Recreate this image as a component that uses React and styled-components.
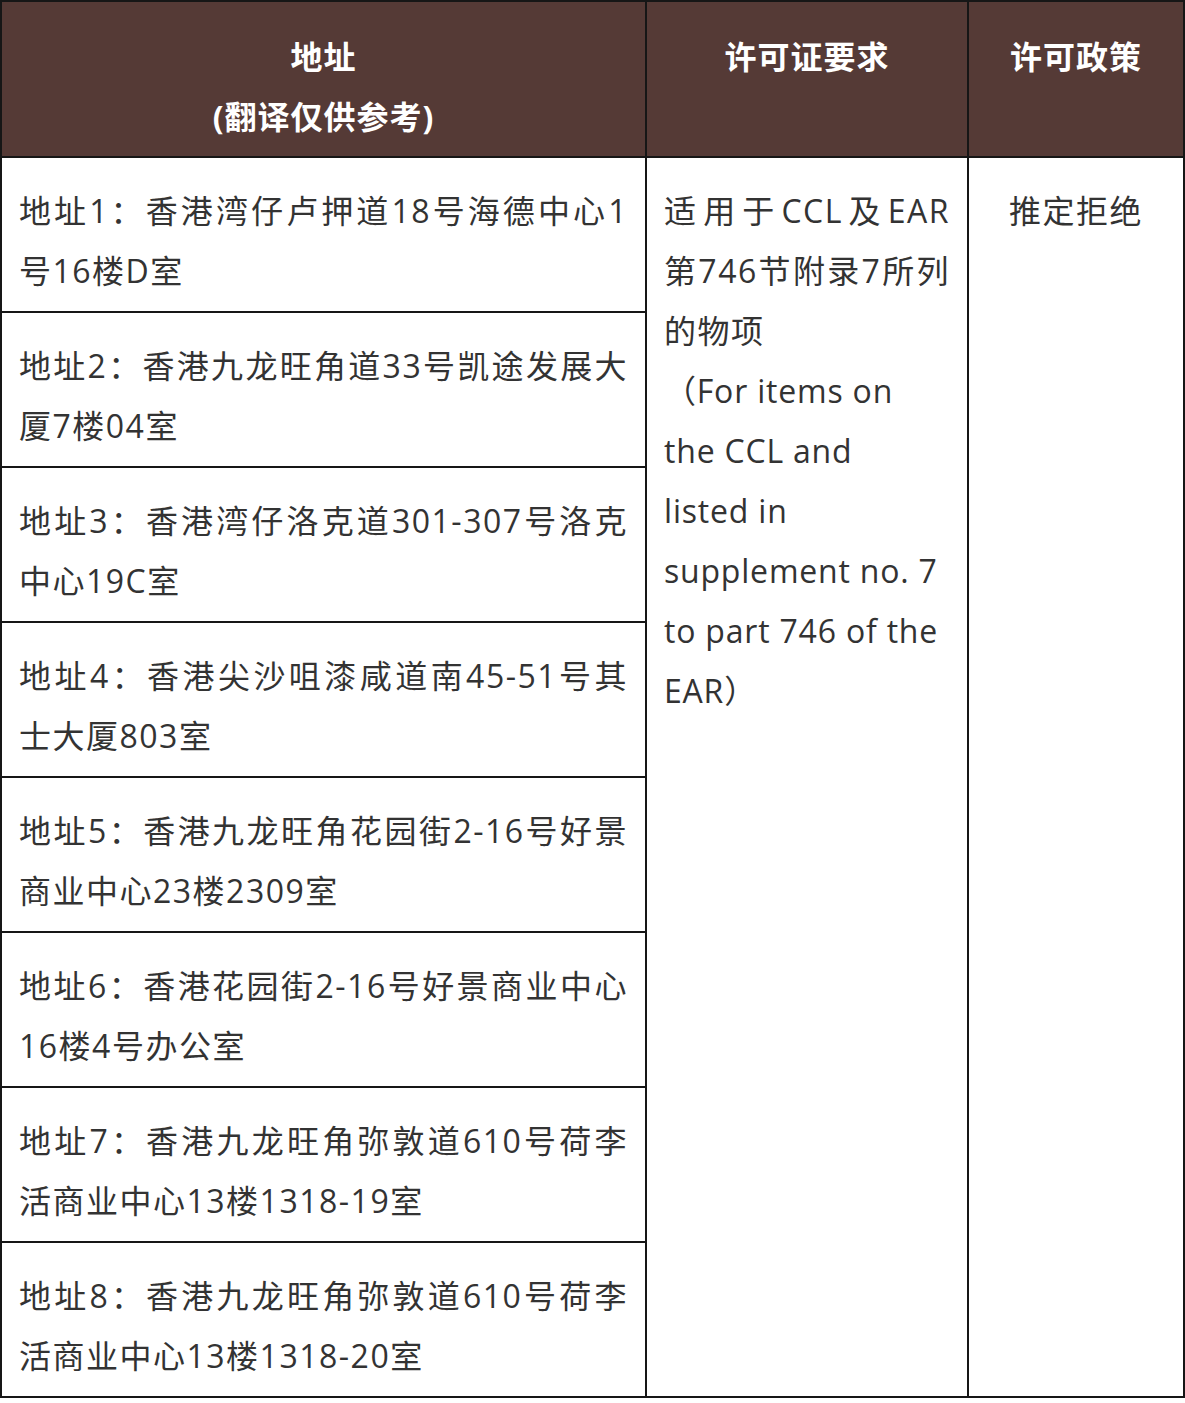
import React from 'react';
import styled, { createGlobalStyle } from 'styled-components';

const GlobalStyle = createGlobalStyle`
  html, body {
    margin: 0;
    padding: 0;
    background: #ffffff;
  }
  body {
    font-family: "Open Sans", "Noto Sans CJK SC", sans-serif;
  }
`;

const Table = styled.table`
  width: 1183px;
  border-collapse: collapse;
  table-layout: fixed;
  color: #333333;
  font-size: 32px;
  line-height: 60px;
  letter-spacing: 1.5px;
`;

const HeadCell = styled.th`
  background: #553a36;
  color: #ffffff;
  font-weight: 700;
  text-align: center;
  vertical-align: top;
  border: 2px solid #161616;
  padding: 25px 10px 9px;
  letter-spacing: 1px;
`;

const Cell = styled.td`
  border: 2px solid #161616;
  vertical-align: top;
  padding: 23px 17px 10px 17px;
  text-align: ${props => props.align || 'left'};
`;

const Line = styled.span`
  display: block;
  white-space: nowrap;
  text-align-last: ${props => (props.spread ? 'justify' : 'auto')};
  letter-spacing: ${props => (props.en ? '0.8px' : 'inherit')};
`;

const addresses = [
  ['地址1：香港湾仔卢押道18号海德中心1', '号16楼D室'],
  ['地址2：香港九龙旺角道33号凯途发展大', '厦7楼04室'],
  ['地址3：香港湾仔洛克道301-307号洛克', '中心19C室'],
  ['地址4：香港尖沙咀漆咸道南45-51号其', '士大厦803室'],
  ['地址5：香港九龙旺角花园街2-16号好景', '商业中心23楼2309室'],
  ['地址6：香港花园街2-16号好景商业中心', '16楼4号办公室'],
  ['地址7：香港九龙旺角弥敦道610号荷李', '活商业中心13楼1318-19室'],
  ['地址8：香港九龙旺角弥敦道610号荷李', '活商业中心13楼1318-20室'],
];

const requirement = [
  { text: '适用于CCL及EAR', spread: true },
  { text: '第746节附录7所列', spread: true },
  { text: '的物项' },
  { text: '（For items on', en: true },
  { text: 'the CCL and', en: true },
  { text: 'listed in', en: true },
  { text: 'supplement no. 7', en: true },
  { text: 'to part 746 of the', en: true },
  { text: 'EAR）', en: true },
];

export default function App() {
  return (
    <>
      <GlobalStyle />
      <Table>
        <colgroup>
          <col style={{ width: 645 }} />
          <col style={{ width: 322 }} />
          <col style={{ width: 216 }} />
        </colgroup>
        <thead>
          <tr>
            <HeadCell>
              地址
              <br />
              (翻译仅供参考)
            </HeadCell>
            <HeadCell>许可证要求</HeadCell>
            <HeadCell>许可政策</HeadCell>
          </tr>
        </thead>
        <tbody>
          {addresses.map((lines, i) => (
            <tr key={i}>
              <Cell>
                {lines.map((l, j) => (
                  <Line key={j} spread={j === 0}>{l}</Line>
                ))}
              </Cell>
              {i === 0 && (
                <>
                  <Cell rowSpan={addresses.length}>
                    {requirement.map((l, j) => (
                      <Line key={j} spread={l.spread} en={l.en}>
                        {l.text}
                      </Line>
                    ))}
                  </Cell>
                  <Cell rowSpan={addresses.length} align="center">推定拒绝</Cell>
                </>
              )}
            </tr>
          ))}
        </tbody>
      </Table>
    </>
  );
}
